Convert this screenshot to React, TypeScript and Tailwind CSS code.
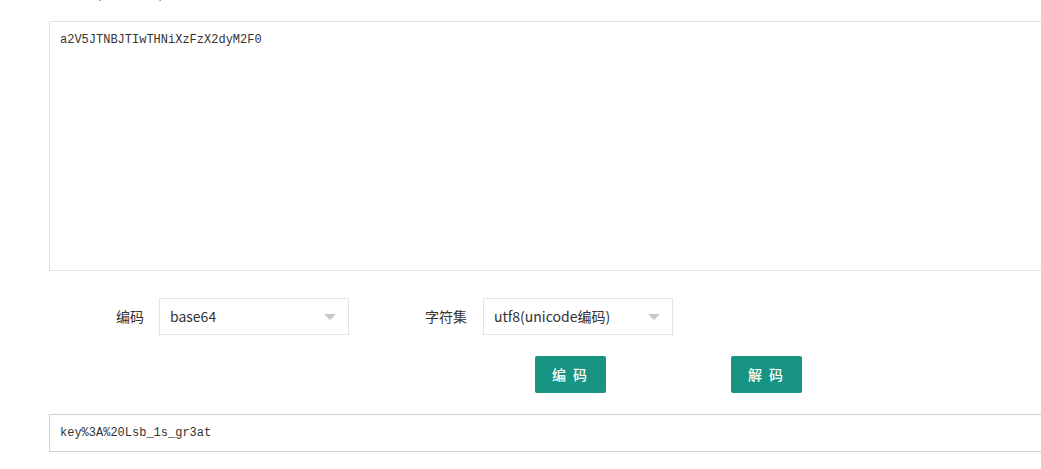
import { useState } from "react";

const cjk = "font-['Microsoft_YaHei','Noto_Sans_CJK_SC',Arial,sans-serif]";
const mono = "font-['SimSun','Liberation_Mono','Noto_Sans_CJK_SC',monospace]";

function Select({ value, width }: { value: string; width: string }) {
  return (
    <div
      className={`flex h-[37px] items-center justify-between border border-[#e3e3e3] bg-white pl-[10px] pr-[12px] text-[14px] text-[#333] ${width} ${cjk}`}
    >
      <span>{value}</span>
      {/* 下拉箭头 */}
      <span className="h-0 w-0 border-x-[6px] border-t-[6px] border-x-transparent border-t-[#c8c8c8]" />
    </div>
  );
}

export default function App() {
  const [input, setInput] = useState("a2V5JTNBJTIwTHNiXzFzX2dyM2F0");
  const [output, setOutput] = useState("key%3A%20Lsb_1s_gr3at");

  return (
    <div className="h-[469px] w-[1041px] overflow-hidden bg-white">
      <div className="w-[1100px] pl-[49px]">
        {/* 被裁掉的标题 */}
        <div className="h-[21px] overflow-hidden">
          <p className={`-mt-[14px] pl-[1px] text-[14px] leading-[16px] text-[#666] ${cjk}`}>
            base64、base32、base16
          </p>
        </div>

        {/* 输入区域 */}
        <textarea
          value={input}
          onChange={(e) => setInput(e.target.value)}
          className={`block h-[250px] w-full resize-none border border-[#e2e2e2] px-[10px] pt-[11px] text-[12px] leading-[14px] text-[#333] outline-none ${mono}`}
        />

        {/* 选项 */}
        <div className="mt-[27px] flex items-center">
          <span className={`ml-[67px] text-[14px] text-[#333] ${cjk}`}>编码</span>
          <div className="ml-[15px]">
            <Select value="base64" width="w-[190px]" />
          </div>
          <span className={`ml-[76px] text-[14px] text-[#333] ${cjk}`}>字符集</span>
          <div className="ml-[16px]">
            <Select value="utf8(unicode编码)" width="w-[190px]" />
          </div>
        </div>

        {/* 按钮 */}
        <div className="mt-[21px] flex">
          <button
            className={`ml-[486px] h-[37px] w-[71px] rounded-[2px] bg-[#179482] text-[14px] font-medium tracking-[2px] text-white ${cjk}`}
          >
            编 码
          </button>
          <button
            className={`ml-[125px] h-[37px] w-[71px] rounded-[2px] bg-[#179482] text-[14px] font-medium tracking-[2px] text-white ${cjk}`}
          >
            解 码
          </button>
        </div>

        {/* 输出区域 */}
        <input
          value={output}
          onChange={(e) => setOutput(e.target.value)}
          className={`mt-[21px] block h-[38px] w-full border border-[#d2d2d2] px-[10px] text-[12px] text-[#333] outline-none ${mono}`}
        />
      </div>
    </div>
  );
}
